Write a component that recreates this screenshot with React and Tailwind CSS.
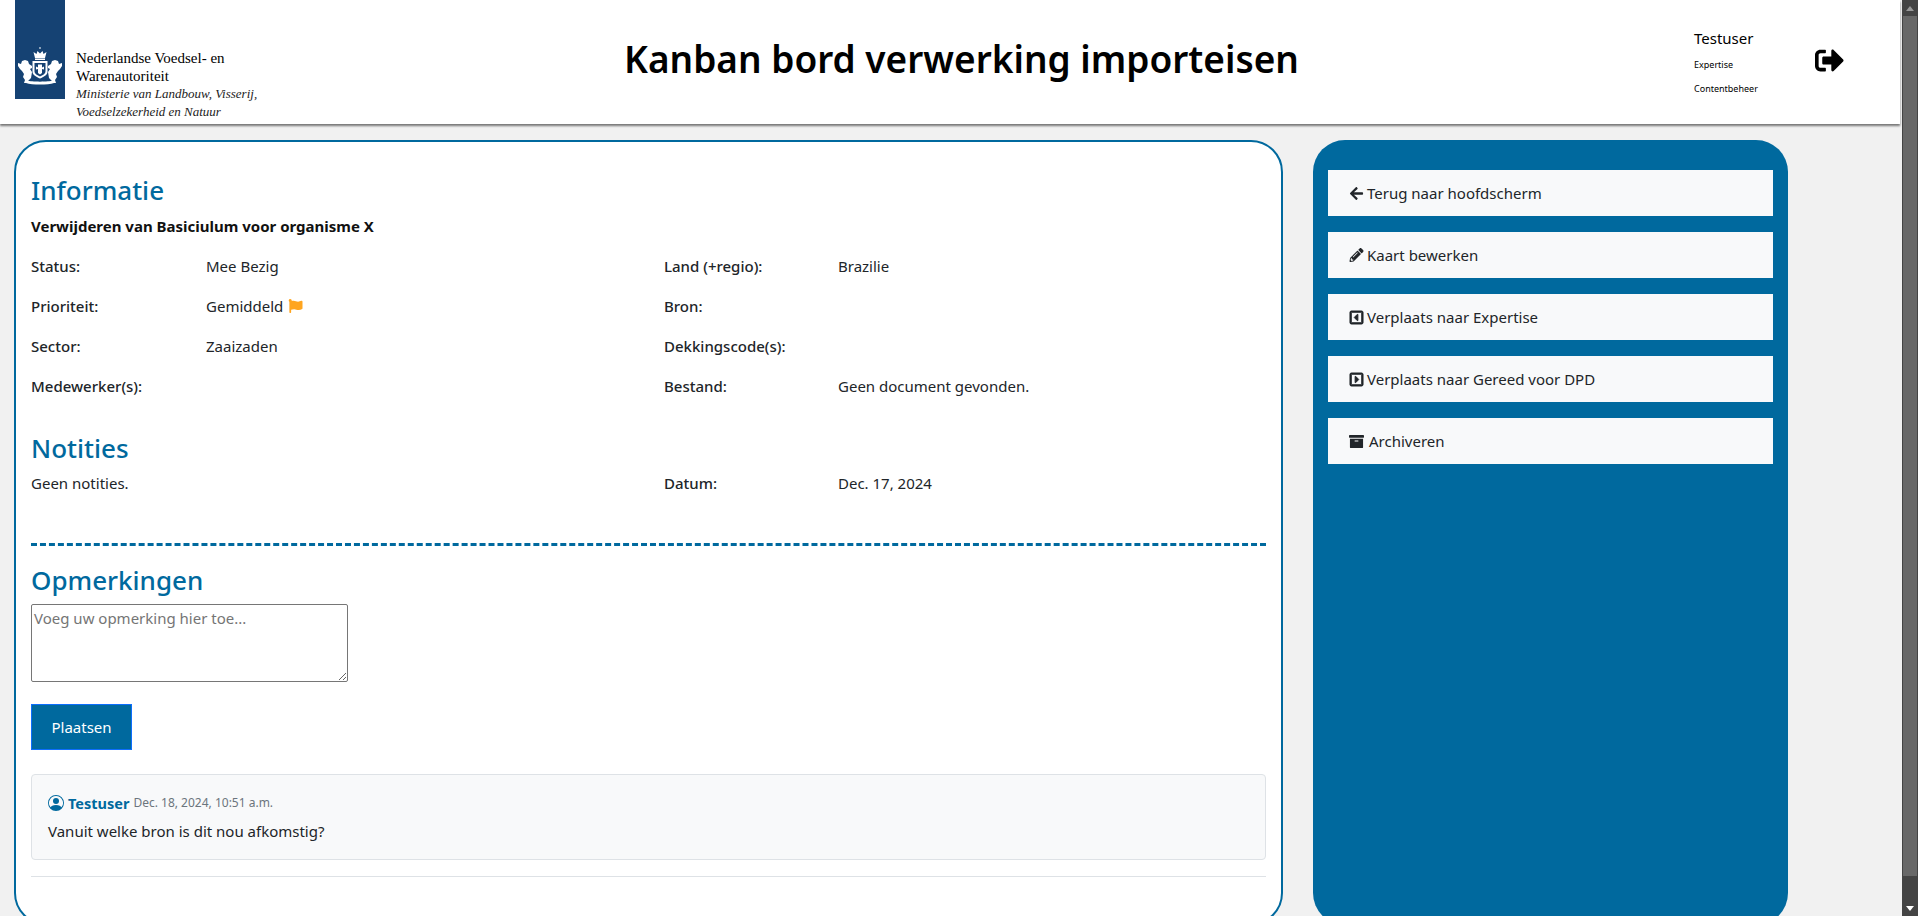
import { FaArrowLeft, FaPencilAlt, FaRegCaretSquareLeft, FaRegCaretSquareRight, FaArchive, FaFlag, FaSignOutAlt } from 'react-icons/fa';
import { BsPersonCircle } from 'react-icons/bs';

const Crest = () => (
  <svg viewBox="0 0 50 50" className="w-[50px] h-[50px]" fill="white">
    {/* crown */}
    <rect x="24.500" y="0" width="1" height="2" />
    <path d="M20 11l-1.500-6 3 2 1-3 2.500 2.500 2.500-2.500 1 3 3-2-1.500 6z" />
    <rect x="20" y="11.500" width="10" height="1.500" />
    {/* lions */}
    <path d="M3 16l3 1 1-3 3-1 3 1 1 3 3 2v2l-2 1 2 3-1 6-3 3 3 1-1 1h-6l1-3-2-3 1-3-2-3-2-2-2-3z" />
    <path d="M47 16l-3 1-1-3-3-1-3 1-1 3-3 2v2l2 1-2 3 1 6 3 3-3 1 1 1h6l-1-3 2-3-1-3 2-3 2-2 2-3z" />
    {/* shield */}
    <path d="M17.500 14h15v11c0 3-4 5-7.500 6.500-3.500-1.500-7.500-3.500-7.500-6.500z" />
    <path d="M19.500 16h11v8.500c0 2-3 4-5.500 5-2.500-1-5.500-3-5.500-5z" fill="#154273" />
    <path d="M23 17.500h4v3l2-1v3l-2-.5v4l-2 1.500-2-1.500v-4l-2 .5v-3l2 1z" />
    {/* ribbon */}
    <path d="M12 33.500c4 1.500 22 1.500 26 0l1 2.500c-6 2-22 2-28 0z" />
  </svg>
);

const Row = ({ label, labelWidth = 'w-[175px]', children }) => (
  <div className="flex h-[40px] items-start">
    <span className={`${labelWidth} shrink-0 font-medium text-[#212529]`}>{label}</span>
    <span className="flex items-center gap-1 text-[#212529]">{children}</span>
  </div>
);

const SideButton = ({ icon, children }) => (
  <button className="flex h-[46px] w-full items-center gap-[3px] bg-[#f8f9fa] pl-[21px] text-left text-[#212529]">
    {icon}
    {children}
  </button>
);

export default function App() {
  return (
    <div className="flex h-[916px] overflow-hidden bg-[#f1f1f1] text-[15px] font-['Noto_Sans',sans-serif]">
      <div className="w-[1902px] shrink-0">
        <header className="flex h-[124px] w-[1900px] items-stretch bg-white shadow-[0_2px_2px_#777]">
          <div className="flex w-[300px] shrink-0 pl-[15px]">
            <div className="h-[99px] w-[50px] shrink-0 bg-[#154273] pt-[47px]">
              <Crest />
            </div>
            <div className="pl-[11px] pt-[50px] font-['Liberation_Serif',serif] text-[15px] leading-[17.500px] text-black">
              <div>Nederlandse Voedsel- en</div>
              <div>Warenautoriteit</div>
              <div className="text-[13px] italic leading-[17.500px] text-[#222]">Ministerie van Landbouw, Visserij,</div>
              <div className="text-[13px] italic leading-[17.500px] text-[#222]">Voedselzekerheid en Natuur</div>
            </div>
          </div>
          <h1 className="flex-1 pr-[71px] pt-[31px] text-center text-[37px] leading-[56px] font-semibold text-black">
            Kanban bord verwerking importeisen
          </h1>
          <div className="w-[121px] shrink-0 pt-[27px] text-black">
            <div className="text-[15px] leading-[22px]">Testuser</div>
            <div className="mt-[8px] text-[9px] leading-[16px]">Expertise</div>
            <div className="mt-[8px] text-[9px] leading-[16px]">Contentbeheer</div>
          </div>
          <div className="w-[85px] shrink-0 pt-[46px] text-black">
            <FaSignOutAlt className="h-[29px] w-[29px]" />
          </div>
        </header>

        <main className="flex items-start gap-[30px] pl-[14px] pt-[16px]">
          <section className="h-[785px] w-[1269px] shrink-0 rounded-[32px] border-2 border-[#00699e] bg-white px-[15px] pt-[30px]">
            <h2 className="text-[26px] leading-[36px] font-medium text-[#00699e]">Informatie</h2>
            <p className="mt-[6px] leading-[24px] font-bold text-[#111]">Verwijderen van Basiciulum voor organisme X</p>
            <div className="mt-[17px] grid grid-cols-[633px_1fr]">
              <div>
                <Row label="Status:">Mee Bezig</Row>
                <Row label="Prioriteit:">
                  Gemiddeld <FaFlag className="ml-[1px] h-[14px] w-[15px] text-[#ffa51f]" />
                </Row>
                <Row label="Sector:">Zaaizaden</Row>
                <Row label="Medewerker(s):" />
              </div>
              <div>
                <Row label="Land (+regio):" labelWidth="w-[174px]">Brazilie</Row>
                <Row label="Bron:" labelWidth="w-[174px]" />
                <Row label="Dekkingscode(s):" labelWidth="w-[174px]" />
                <Row label="Bestand:" labelWidth="w-[174px]">Geen document gevonden.</Row>
              </div>
            </div>
            <div className="mt-[15px] grid grid-cols-[633px_1fr]">
              <div>
                <h2 className="text-[26px] leading-[36px] font-medium text-[#00699e]">Notities</h2>
                <p className="mt-[6px] text-[#212529]">Geen notities.</p>
              </div>
              <div className="pt-[42px]">
                <Row label="Datum:" labelWidth="w-[174px]">Dec. 17, 2024</Row>
              </div>
            </div>
            <div className="mt-[31px] border-t-[3px] border-dashed border-[#00699e]" />
            <h2 className="mt-[16px] text-[26px] leading-[36px] font-medium text-[#00699e]">Opmerkingen</h2>
            <textarea
              placeholder="Voeg uw opmerking hier toe..."
              className="mt-[6px] block h-[78px] w-[317px] rounded-[2px] border border-[#767676] px-[2px] py-[2px] placeholder:text-[#757575]"
            />
            <button className="mt-[22px] block h-[46px] w-[101px] border border-[#0d6efd] bg-[#00699e] text-white">Plaatsen</button>
            <div className="mt-[24px] h-[86px] rounded-[4px] border border-[#dee2e6] bg-[#f8f9fa] px-[16px] pt-[16px]">
              <div className="flex items-center gap-[4px] leading-[24px]">
                <BsPersonCircle className="h-[16px] w-[16px] text-[#00699e]" />
                <span className="text-[14.500px] font-bold text-[#00699e]">Testuser</span>
                <span className="text-[12px] text-[#6c757d]">Dec. 18, 2024, 10:51 a.m.</span>
              </div>
              <p className="mt-[4px] leading-[24px] text-[#212529]">Vanuit welke bron is dit nou afkomstig?</p>
            </div>
            <div className="mt-[16px] border-t border-[#dee2e6]" />
          </section>

          <aside className="flex h-[785px] w-[475px] shrink-0 flex-col gap-[16px] rounded-[32px] bg-[#00699e] pl-[15px] pr-[15px] pt-[30px]">
            <SideButton icon={<FaArrowLeft className="h-[15px] w-[15px]" />}>Terug naar hoofdscherm</SideButton>
            <SideButton icon={<FaPencilAlt className="h-[14px] w-[15px]" />}>Kaart bewerken</SideButton>
            <SideButton icon={<FaRegCaretSquareLeft className="h-[15px] w-[15px]" stroke="currentColor" strokeWidth={30} />}>Verplaats naar Expertise</SideButton>
            <SideButton icon={<FaRegCaretSquareRight className="h-[15px] w-[15px]" stroke="currentColor" strokeWidth={30} />}>Verplaats naar Gereed voor DPD</SideButton>
            <SideButton icon={<FaArchive className="mr-[2px] h-[15px] w-[15px]" />}>Archiveren</SideButton>
          </aside>
        </main>
      </div>

      {/* browser scrollbar */}
      <div className="flex w-[16px] shrink-0 flex-col bg-[#444]">
        <div className="flex h-[16px] items-center justify-center">
          <div className="h-0 w-0 border-x-[4px] border-b-[5px] border-x-transparent border-b-[#999]" />
        </div>
        <div className="mx-[1px] h-[860px] bg-[#686868]" />
        <div className="flex flex-1 items-end justify-center pb-[5px]">
          <div className="h-0 w-0 border-x-[4px] border-t-[5px] border-x-transparent border-t-white" />
        </div>
      </div>
    </div>
  );
}
